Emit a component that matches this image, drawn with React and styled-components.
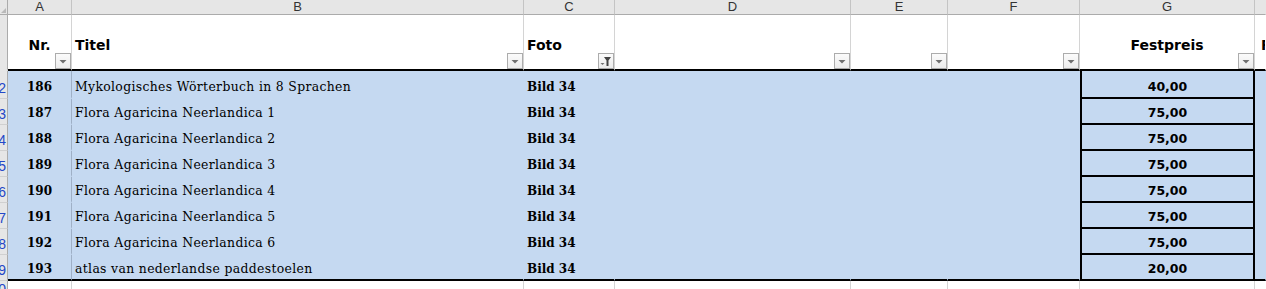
import React from 'react';
import styled, { createGlobalStyle } from 'styled-components';

const COLS = '8px 64px 452px 91px 236px 97px 132px 175px 1fr';
const BLUE = '#c5d9f1';

const Global = createGlobalStyle`
  html, body { margin: 0; padding: 0; background: #fff; overflow: hidden; }
  body { width: 1266px; height: 289px; }
`;

const Sheet = styled.div`
  width: 1266px;
  display: flex;
  flex-direction: column;
`;

const Row = styled.div`
  display: grid;
  grid-template-columns: ${COLS};
  height: ${(p) => p.$h}px;
`;

const Corner = styled.div`
  background: #e6e6e6;
  border-right: 1px solid #ababab;
  border-bottom: 1px solid #ababab;
  position: relative;
  &::after {
    content: '';
    position: absolute;
    right: 1px;
    bottom: 1px;
    border-left: 5px solid transparent;
    border-bottom: 5px solid #b9b9b9;
  }
`;

const ColLetter = styled.div`
  background: #e6e6e6;
  border-right: 1px solid ${(p) => (p.$last ? 'transparent' : '#c4c4c4')};
  border-bottom: 1px solid #ababab;
  font-family: 'Liberation Sans', Arial, sans-serif;
  font-size: 13px;
  color: #333;
  display: flex;
  align-items: center;
  justify-content: center;
  line-height: 14px;
`;

const RowNum = styled.div`
  background: #e6e6e6;
  border-right: 1px solid #ababab;
  border-bottom: ${(p) => (p.$thick ? '2px solid #e6e6e6' : '1px solid #d0d0d0')};
  font-family: 'Liberation Sans', Arial, sans-serif;
  font-size: 14px;
  color: #2448c8;
  display: flex;
  align-items: ${(p) => (p.$top ? 'flex-start' : 'flex-end')};
  justify-content: flex-end;
  padding: 0 1px ${(p) => (p.$top ? 0 : 2)}px 0;
  overflow: hidden;
  white-space: nowrap;
  line-height: 16px;
`;

const HeadCell = styled.div`
  position: relative;
  background: #fff;
  border-right: 1px solid ${(p) => (p.$last ? 'transparent' : '#d4d4d4')};
  border-bottom: 2px solid #000;
  display: flex;
  align-items: center;
  justify-content: ${(p) => (p.$center ? 'center' : 'flex-start')};
  padding: 5px ${(p) => (p.$center ? 0 : 3)}px 0 ${(p) => (p.$center ? 0 : 3)}px;
  font-family: 'DejaVu Sans', Verdana, sans-serif;
  font-weight: bold;
  font-size: 14px;
  color: #000;
  overflow: hidden;
  white-space: nowrap;
`;

const FilterBtn = styled.div`
  position: absolute;
  right: 0;
  bottom: 0;
  width: 16px;
  height: 16px;
  box-sizing: border-box;
  border: 1px solid #acacac;
  background: linear-gradient(#fbfbfb, #ececec);
  display: flex;
  svg { display: block; }
`;

const DataCell = styled.div`
  background: ${BLUE};
  border-right: 1px solid ${(p) => (p.$line ? '#9fb0c6' : BLUE)};
  border-bottom: 2px solid ${(p) => (p.$last ? '#000' : BLUE)};
  display: flex;
  align-items: flex-end;
  justify-content: ${(p) => (p.$center ? 'center' : 'flex-start')};
  padding: 0 3px 2px;
  font-family: 'DejaVu Serif', Georgia, serif;
  font-size: ${(p) => (p.$bold ? 12 : 12.4)}px;
  letter-spacing: ${(p) => (p.$bold ? 0 : 0.35)}px;
  font-weight: ${(p) => (p.$bold ? 'bold' : 'normal')};
  line-height: 16px;
  color: #000;
  white-space: nowrap;
  overflow: hidden;
`;

const PriceCell = styled.div`
  background: ${BLUE};
  border-left: 2px solid #000;
  border-right: 2px solid #000;
  border-bottom: 2px solid #000;
  display: flex;
  align-items: flex-end;
  justify-content: center;
  padding-bottom: 2px;
  font-family: 'DejaVu Sans', Verdana, sans-serif;
  font-weight: bold;
  font-size: 12.5px;
  line-height: 16px;
  color: #000;
`;

const BlankCell = styled.div`
  background: #fff;
  border-right: 1px solid ${(p) => (p.$last ? 'transparent' : '#d4d4d4')};
`;

const Arrow = () => (
  <svg width="14" height="14" viewBox="0 0 14 14">
    <polygon points="3.5,6 10.5,6 7,9.5" fill="#707070" />
  </svg>
);

const Funnel = () => (
  <svg width="14" height="14" viewBox="0 0 14 14">
    <polygon points="1.5,9 5.5,9 3.5,11" fill="#707070" />
    <polygon points="5,3 12,3 9.5,6.5 9.5,12 7.5,12 7.5,6.5" fill="#444" />
  </svg>
);

const rows = [
  ['186', 'Mykologisches Wörterbuch in 8 Sprachen', '40,00'],
  ['187', 'Flora Agaricina Neerlandica 1', '75,00'],
  ['188', 'Flora Agaricina Neerlandica 2', '75,00'],
  ['189', 'Flora Agaricina Neerlandica 3', '75,00'],
  ['190', 'Flora Agaricina Neerlandica 4', '75,00'],
  ['191', 'Flora Agaricina Neerlandica 5', '75,00'],
  ['192', 'Flora Agaricina Neerlandica 6', '75,00'],
  ['193', 'atlas van nederlandse paddestoelen', '20,00'],
];

const letters = ['A', 'B', 'C', 'D', 'E', 'F', 'G', ''];

export default function App() {
  return (
    <>
      <Global />
      <Sheet>
        <Row $h={15}>
          <Corner />
          {letters.map((l, i) => (
            <ColLetter key={i} $last={i === letters.length - 1}>
              {l}
            </ColLetter>
          ))}
        </Row>

        <Row $h={56}>
          <RowNum $thick />
          <HeadCell $center>
            Nr.
            <FilterBtn><Arrow /></FilterBtn>
          </HeadCell>
          <HeadCell>
            Titel
            <FilterBtn><Arrow /></FilterBtn>
          </HeadCell>
          <HeadCell>
            Foto
            <FilterBtn><Funnel /></FilterBtn>
          </HeadCell>
          <HeadCell>
            <FilterBtn><Arrow /></FilterBtn>
          </HeadCell>
          <HeadCell>
            <FilterBtn><Arrow /></FilterBtn>
          </HeadCell>
          <HeadCell>
            <FilterBtn><Arrow /></FilterBtn>
          </HeadCell>
          <HeadCell $center>
            Festpreis
            <FilterBtn><Arrow /></FilterBtn>
          </HeadCell>
          <HeadCell $last style={{ paddingLeft: 6 }}>Preis</HeadCell>
        </Row>

        {rows.map(([nr, title, price], i) => {
          const last = i === rows.length - 1;
          return (
            <Row key={nr} $h={i === 0 ? 28 : 26}>
              <RowNum>{i + 2}</RowNum>
              <DataCell $center $bold $line $last={last}>{nr}</DataCell>
              <DataCell $last={last}>{title}</DataCell>
              <DataCell $bold $last={last}>Bild 34</DataCell>
              <DataCell $last={last} />
              <DataCell $last={last} />
              <DataCell $last={last} />
              <PriceCell>{price}</PriceCell>
              <DataCell $last={last} />
            </Row>
          );
        })}

        <Row $h={20}>
          <RowNum $top>10</RowNum>
          {letters.map((l, i) => (
            <BlankCell key={i} $last={i === letters.length - 1} />
          ))}
        </Row>
      </Sheet>
    </>
  );
}
